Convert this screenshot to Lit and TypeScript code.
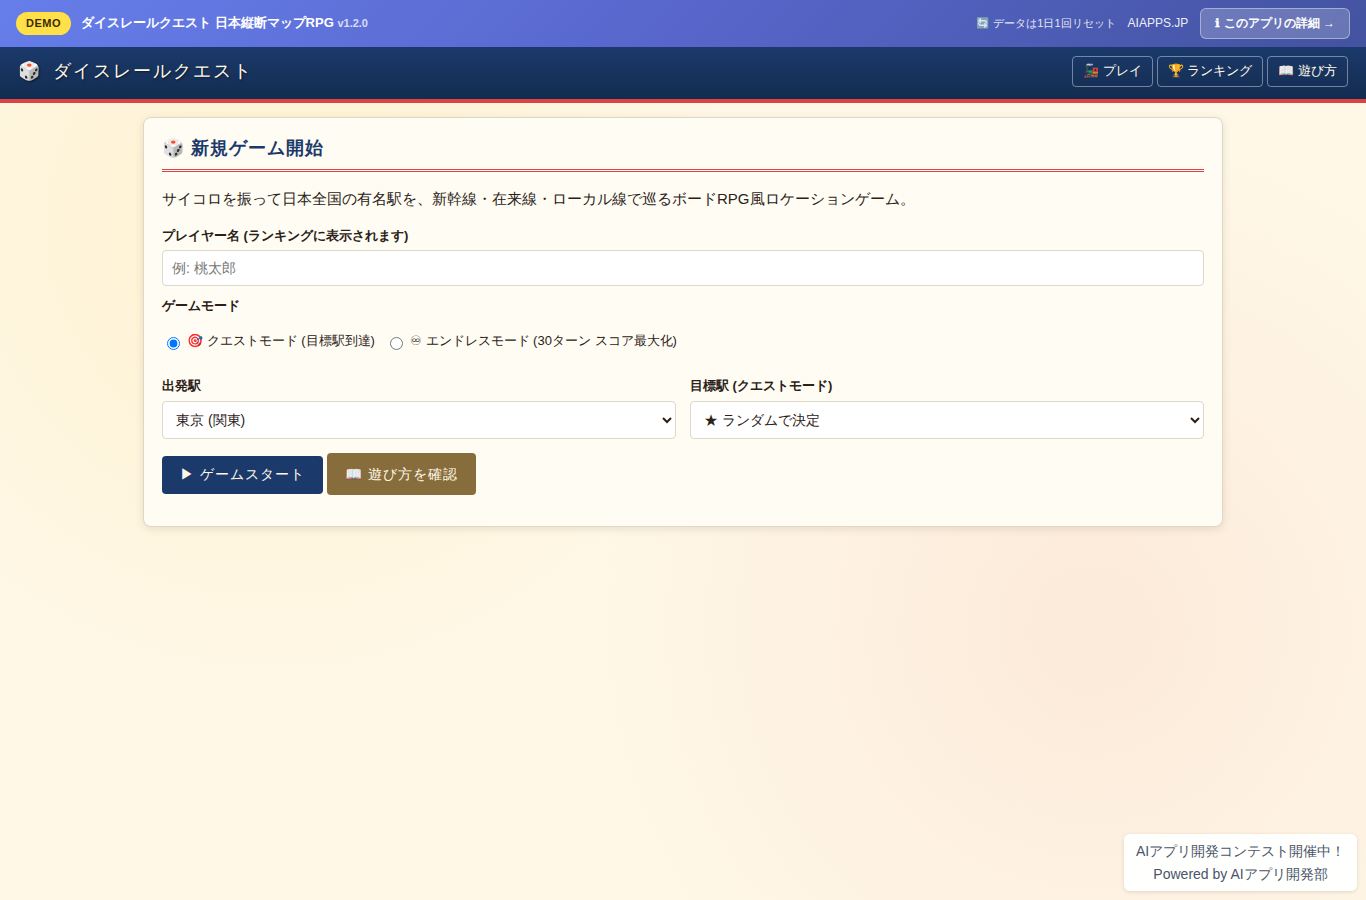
import { LitElement, html, css } from "lit";
import { customElement } from "lit/decorators.js";

@customElement("app-root")
export class AppRoot extends LitElement {
  static styles = css`
    :host {
      display: block;
      position: relative;
      min-height: 900px;
      box-sizing: border-box;
      font-family: "Liberation Sans", sans-serif;
      font-size: 15px;
      line-height: 1.7;
      color: #2b2118;
      background:
        radial-gradient(circle at 20% 25%, rgba(255, 215, 110, 0.18), transparent 38%),
        radial-gradient(circle at 80% 70%, rgba(220, 68, 68, 0.08), transparent 40%),
        #fff8e7;
    }
    * { box-sizing: border-box; }
    .demo {
      display: flex;
      align-items: center;
      justify-content: space-between;
      height: 47px;
      padding: 0 16px;
      color: #fff;
      font-size: 13px;
      line-height: 1.5;
      background: linear-gradient(135deg, #667eea 0%, #5866cb 50%, #4353a0 100%);
    }
    .group { display: flex; align-items: center; }
    .badge {
      height: 23px;
      padding: 0 10px;
      border-radius: 12px;
      margin-right: 10px;
      background: #ffe047;
      color: #3b2a05;
      font-size: 11px;
      font-weight: 700;
      line-height: 23px;
      letter-spacing: 0.5px;
    }
    .name { font-weight: 700; margin-bottom: 2px; }
    .version { font-size: 11px; opacity: 0.75; }
    .reset { font-size: 11px; opacity: 0.85; margin-right: 12px; }
    .site { font-size: 12px; opacity: 0.9; margin: 0 12px 2px 0; }
    .detail {
      height: 31px;
      padding: 0 14px;
      border: 1px solid rgba(255, 255, 255, 0.4);
      border-radius: 6px;
      background: rgba(255, 255, 255, 0.2);
      font-size: 12px;
      font-weight: 700;
      line-height: 29px;
    }
    .info {
      margin-right: 0.5px;
      font-family: "DejaVu Sans", sans-serif;
      line-height: 1;
      -webkit-text-stroke: 0.4px currentColor;
    }
    .header {
      display: flex;
      align-items: center;
      justify-content: space-between;
      height: 56px;
      padding: 0 18px;
      border-bottom: 4px solid #dc4444;
      background: linear-gradient(180deg, #1b3a6b, #132c50);
      color: #fff8e7;
    }
    .logo {
      padding-bottom: 3px;
      font-size: 18px;
      letter-spacing: 2px;
      word-spacing: 4px;
      text-shadow: 1px 1px 2px rgba(0, 0, 0, 0.5);
    }
    .nav { display: flex; gap: 4px; margin-bottom: 4px; }
    .nav span {
      height: 31px;
      padding: 0 10px;
      border: 1px solid rgba(255, 255, 255, 0.4);
      border-radius: 4px;
      font-size: 13px;
      line-height: 28px;
    }
    .card {
      width: 1080px;
      height: 410px;
      margin: 14px auto 0;
      padding: 14px 18px;
      border: 1px solid #ddd8c8;
      border-radius: 8px;
      background: #fffdf3;
      box-shadow: 0 2px 8px rgba(80, 60, 20, 0.13);
    }
    h2 {
      height: 40px;
      margin: 0 0 14px;
      border-bottom: 3px double #dc4444;
      color: #1b3a6b;
      font-size: 18px;
      line-height: 32px;
      letter-spacing: 1px;
    }
    p { margin: 0 0 13px; height: 26px; line-height: 26px; }
    label, .label { display: block; font-size: 13px; font-weight: 700; height: 22px; line-height: 22px; }
    input[type="text"] {
      display: block;
      width: 100%;
      height: 36px;
      margin: 3px 0 9px;
      padding: 0 9px;
      border: 1px solid #ddd8c8;
      border-radius: 4px;
      background: #fff;
      font-family: inherit;
      font-size: 14px;
    }
    .modes { display: flex; gap: 10px; margin: 13px 0 23px; }
    .modes label { font-weight: 400; display: block; }
    .modes input { margin: 3px 7px 0 5px; vertical-align: -5px; }
    .row { display: grid; grid-template-columns: 1fr 1fr; gap: 14px; }
    select {
      display: block;
      width: 100%;
      height: 38px;
      margin-top: 4px;
      padding: 0 9px;
      border: 1px solid #ddd8c8;
      border-radius: 4px;
      background: #fff;
      color: #2b2118;
      font-family: inherit;
      font-size: 14px;
    }
    .actions { display: flex; align-items: flex-start; gap: 4px; margin-top: 14px; }
    .btn {
      height: 38px;
      margin-top: 3px;
      padding: 0 18px;
      border: 0;
      border-radius: 4px;
      background: #1b3a6b;
      color: #fff8e7;
      font-family: inherit;
      font-size: 14px;
      letter-spacing: 1px;
    }
    .alt { height: 42px; margin-top: 0; padding-top: 2px; background: #876d3b; }
    .promo {
      position: absolute;
      right: 9px;
      bottom: 9px;
      width: 233px;
      height: 57px;
      padding-top: 6px;
      border-radius: 6px;
      background: rgba(255, 255, 255, 0.95);
      box-shadow: 0 1px 4px rgba(0, 0, 0, 0.12);
      color: #4a5568;
      font-size: 14px;
      line-height: 23px;
      text-align: center;
    }
  `;

  render() {
    return html`
      <div class="demo">
        <div class="group">
          <span class="badge">DEMO</span>
          <span class="name">ダイスレールクエスト 日本縦断マップRPG <span class="version">v1.2.0</span></span>
        </div>
        <div class="group">
          <span class="reset">🔄 データは1日1回リセット</span>
          <span class="site">AIAPPS.JP</span>
          <span class="detail"><span class="info">ℹ</span> このアプリの詳細 →</span>
        </div>
      </div>
      <header class="header">
        <div class="logo">🎲 ダイスレールクエスト</div>
        <nav class="nav"><span>🚂 プレイ</span><span>🏆 ランキング</span><span>📖 遊び方</span></nav>
      </header>
      <main class="card">
        <h2>🎲 新規ゲーム開始</h2>
        <p>サイコロを振って日本全国の有名駅を、新幹線・在来線・ローカル線で巡るボードRPG風ロケーションゲーム。</p>
        <label for="player">プレイヤー名 (ランキングに表示されます)</label>
        <input id="player" type="text" placeholder="例: 桃太郎" />
        <div class="label">ゲームモード</div>
        <div class="modes">
          <label><input type="radio" name="mode" checked />🎯 クエストモード (目標駅到達)</label>
          <label><input type="radio" name="mode" />♾ エンドレスモード (30ターン スコア最大化)</label>
        </div>
        <div class="row">
          <div><label for="from">出発駅</label><select id="from"><option>東京 (関東)</option></select></div>
          <div><label for="to">目標駅 (クエストモード)</label><select id="to"><option>★ ランダムで決定</option></select></div>
        </div>
        <div class="actions">
          <button class="btn">▶ ゲームスタート</button>
          <button class="btn alt">📖 遊び方を確認</button>
        </div>
      </main>
      <aside class="promo">AIアプリ開発コンテスト開催中！<br />Powered by AIアプリ開発部</aside>
    `;
  }
}
